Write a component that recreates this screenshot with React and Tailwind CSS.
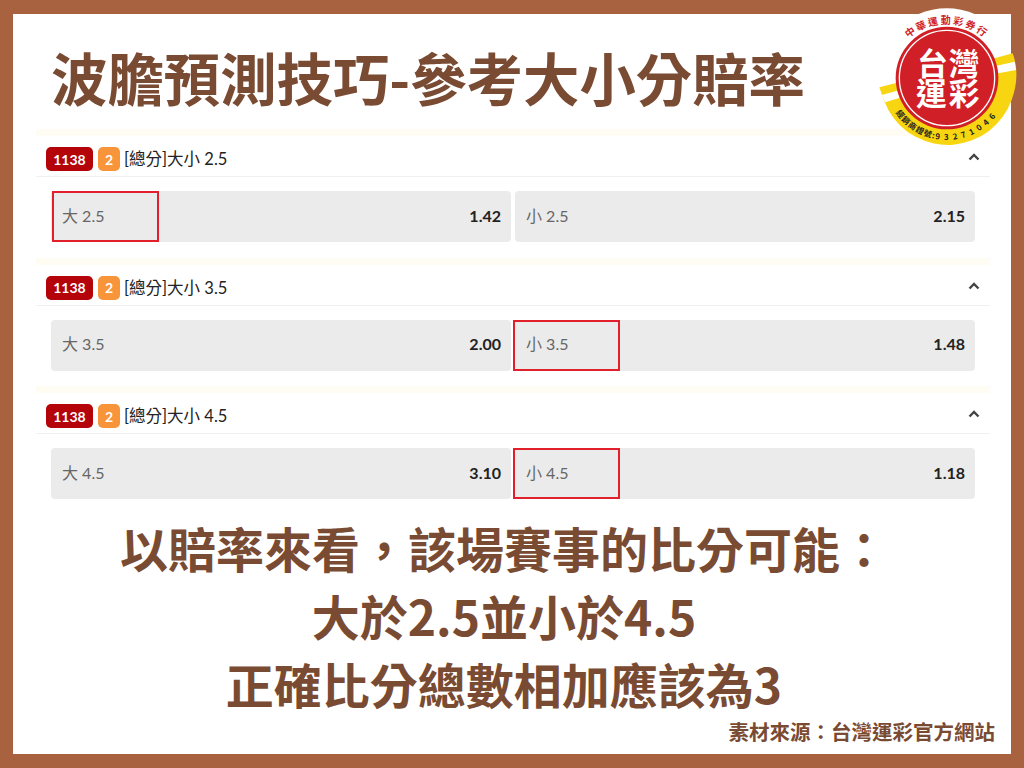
import React from 'react';

const cjk = "font-['Noto_Sans_CJK_TC','Noto_Sans',sans-serif]";
const lato = "font-['Lato','Noto_Sans_CJK_TC',sans-serif]";

const markets = [
  { line: '2.5', over: '1.42', under: '2.15', mark: 'over' },
  { line: '3.5', over: '2.00', under: '1.48', mark: 'under' },
  { line: '4.5', over: '3.10', under: '1.18', mark: 'under' },
];

const Odd = ({ label, price, marked, markClass }) => (
  <div className="relative flex-1 h-[51px] bg-[#ebebeb] rounded flex items-center justify-between pl-[11px] pr-[10px] pb-[2px]">
    <span className="text-[16px] text-[#666666]">{label}</span>
    <span className="text-[16px] font-bold text-[#222222]">{price}</span>
    {marked && (
      <div className={`absolute top-0 w-[107px] h-[51px] border-2 border-[#e2202c] ${markClass}`} />
    )}
  </div>
);

const Market = ({ line, over, under, mark }) => (
  <section className={`h-[128.5px] ${lato}`}>
    <div className="h-[7px] bg-[#fffdf3]" />
    <div className="h-[41px] flex items-center justify-between pt-[6px] pl-[10px] pr-[10px] border-b border-[#f0f0f0]">
      <div className="flex items-center gap-[5px]">
        <span className="h-[24px] w-[47px] rounded-[5px] bg-[#b50409] text-white text-[14px] font-bold flex items-center justify-center">1138</span>
        <span className="h-[24px] w-[22px] rounded-[5px] bg-[#f8943a] text-white text-[14px] font-bold flex items-center justify-center">2</span>
        <span className="text-[16.5px] text-[#222222] -ml-[1px] pt-[1px]">[總分]大小 {line}</span>
      </div>
      <svg className="-mt-[4px]" width="12" height="8" viewBox="0 0 12 8" fill="none">
        <path d="M1.5 6.5 6 2l4.5 4.5" stroke="#444444" strokeWidth="2.4" />
      </svg>
    </div>
    <div className="flex gap-[4px] pt-[14px] pl-[15px] pr-[15px]">
      <Odd label={`大 ${line}`} price={over} marked={mark === 'over'} markClass="left-[1px]" />
      <Odd label={`小 ${line}`} price={under} marked={mark === 'under'} markClass="-left-[2px]" />
    </div>
  </section>
);

const Logo = () => (
  <svg className="absolute right-0 top-0" width="164" height="160" viewBox="0 0 492 480">
    <defs>
      <path id="topArc" d="M 82 250 A 178 178 0 0 1 438 250" />
      <path id="bottomArc" d="M 75 234 A 186 186 0 0 0 447 234" />
      <clipPath id="dome">
        <rect x="0" y="0" width="492" height="100" />
      </clipPath>
    </defs>
    <circle cx="260" cy="245" r="220" fill="#ffffff" clipPath="url(#dome)" />
    <path d="M58 262 L420 170 L458 160 Q482 225 455 300 A204 204 0 0 1 85 330 Q68 295 58 262 Z" fill="#f7d611" />
    <path d="M65 285 L120 270 L125 292 L76 307 Z" fill="#ffffff" />
    <path d="M410 197 L464 185 L468 210 L415 220 Z" fill="#ffffff" />
    <circle cx="261" cy="234" r="154" fill="#d01f26" />
    <circle cx="261" cy="234" r="143" fill="none" stroke="#ffffff" strokeWidth="4" />
    <g fill="#ffffff" fontFamily="'Noto Sans CJK TC', sans-serif" fontWeight="700" fontSize="92">
      <text x="172" y="224">台</text>
      <text x="266" y="224">灣</text>
      <text x="168" y="316">運</text>
      <text x="266" y="316">彩</text>
    </g>
    <text fill="#d01f26" fontFamily="'Noto Sans CJK TC', sans-serif" fontWeight="700" fontSize="30" letterSpacing="6">
      <textPath href="#topArc" startOffset="50%" textAnchor="middle">中華運動彩券行</textPath>
    </text>
    <text fill="#222222" fontFamily="'Noto Sans CJK TC', sans-serif" fontWeight="700" fontSize="24">
      <textPath href="#bottomArc" startOffset="50%" textAnchor="middle">
        <tspan letterSpacing="3">經銷商證號:</tspan>
        <tspan letterSpacing="13">93271046</tspan>
      </textPath>
    </text>
  </svg>
);

export default function App() {
  return (
    <div className={`relative w-[1024px] h-[768px] overflow-hidden bg-[#a8623f] pt-[14px] pl-[13px] pr-[13px] pb-[14px] ${cjk}`}>
      <div className="h-full bg-white flex flex-col text-[#7a4b33]">
        <h1 className="h-[115px] pl-[38px] flex items-center text-[56.4px] font-bold leading-none pt-[11px]">波膽預測技巧-參考大小分賠率</h1>
        <div className="ml-[23px] w-[954px]">
          {markets.map((m) => (
            <Market key={m.line} {...m} />
          ))}
        </div>
        <div className="-mt-[2px] pr-[16px] flex flex-col items-center text-[48px] font-bold leading-[68px]">
          <p>以賠率來看，該場賽事的比分可能：</p>
          <p>大於2.5並小於4.5</p>
          <p>正確比分總數相加應該為3</p>
        </div>
        <p className="text-right pr-[16px] text-[20.5px] font-bold leading-[28px]">素材來源：台灣運彩官方網站</p>
      </div>
      <Logo />
    </div>
  );
}
